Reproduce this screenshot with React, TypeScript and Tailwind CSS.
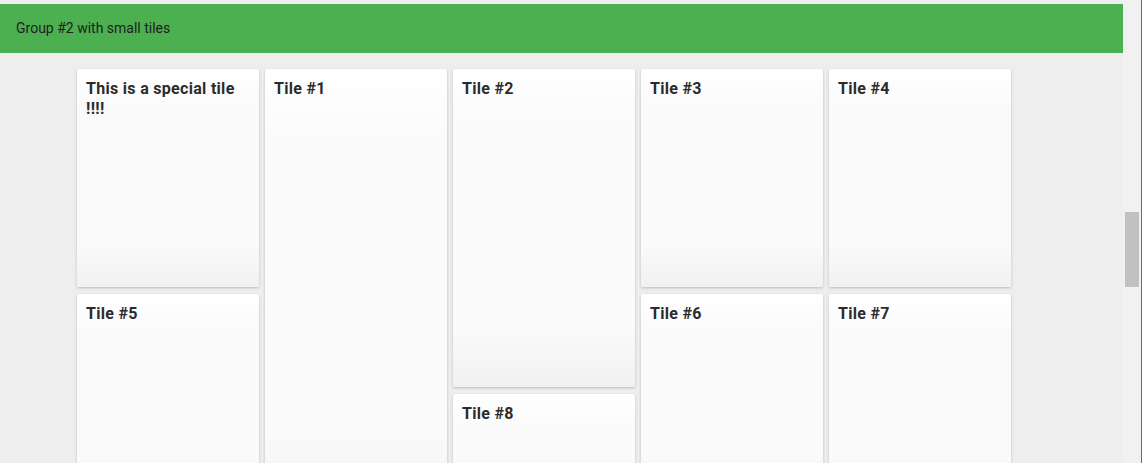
import React from 'react'

type Tile = { title: string; h: number }

const columns: Tile[][] = [
  [{ title: 'This is a special tile !!!!', h: 218 }, { title: 'Tile #5', h: 218 }],
  [{ title: 'Tile #1', h: 443 }],
  [{ title: 'Tile #2', h: 318 }, { title: 'Tile #8', h: 218 }],
  [{ title: 'Tile #3', h: 218 }, { title: 'Tile #6', h: 218 }],
  [{ title: 'Tile #4', h: 218 }, { title: 'Tile #7', h: 218 }],
]

function TileCard({ title, h }: Tile) {
  return (
    <div
      className="w-[182px] shrink-0 rounded-[2px] bg-[linear-gradient(to_bottom,#ffffff_0%,#fafafa_18%,#fafafa_82%,#f1f1f1_100%)] shadow-[0_1px_3px_rgba(0,0,0,0.22)] px-[9px] pt-[10px]"
      style={{ height: h }}
    >
      <h3 className="text-[16px] leading-[20px] font-bold tracking-[0.3px] text-[#2b2b2b]">{title}</h3>
    </div>
  )
}

export default function App() {
  return (
    <div className="h-[463px] w-[1142px] overflow-hidden flex bg-[#eeeeee] font-['Roboto','Liberation_Sans',sans-serif]">
      {/* Main page */}
      <div className="w-[1123px] shrink-0 pt-[4px]">
        <div className="h-[49px] bg-[#4caf50] flex items-center pl-[16px]">
          <span className="text-[14px] text-[#1e1e1e]">Group #2 with small tiles</span>
        </div>
        <div className="flex gap-[6px] pl-[77px] pt-[16px]">
          {columns.map((col, i) => (
            <div key={i} className="flex flex-col gap-[7px]">
              {col.map((t) => (
                <TileCard key={t.title} {...t} />
              ))}
            </div>
          ))}
        </div>
      </div>

      {/* Scrollbar */}
      <div className="flex-1 flex bg-[#f1f1f1]">
        <div className="flex-1 pt-[212px] px-[2px]">
          <div className="h-[75px] bg-[#c1c1c1]" />
        </div>
        <div className="w-px bg-[#7d6464]" />
      </div>
    </div>
  )
}
